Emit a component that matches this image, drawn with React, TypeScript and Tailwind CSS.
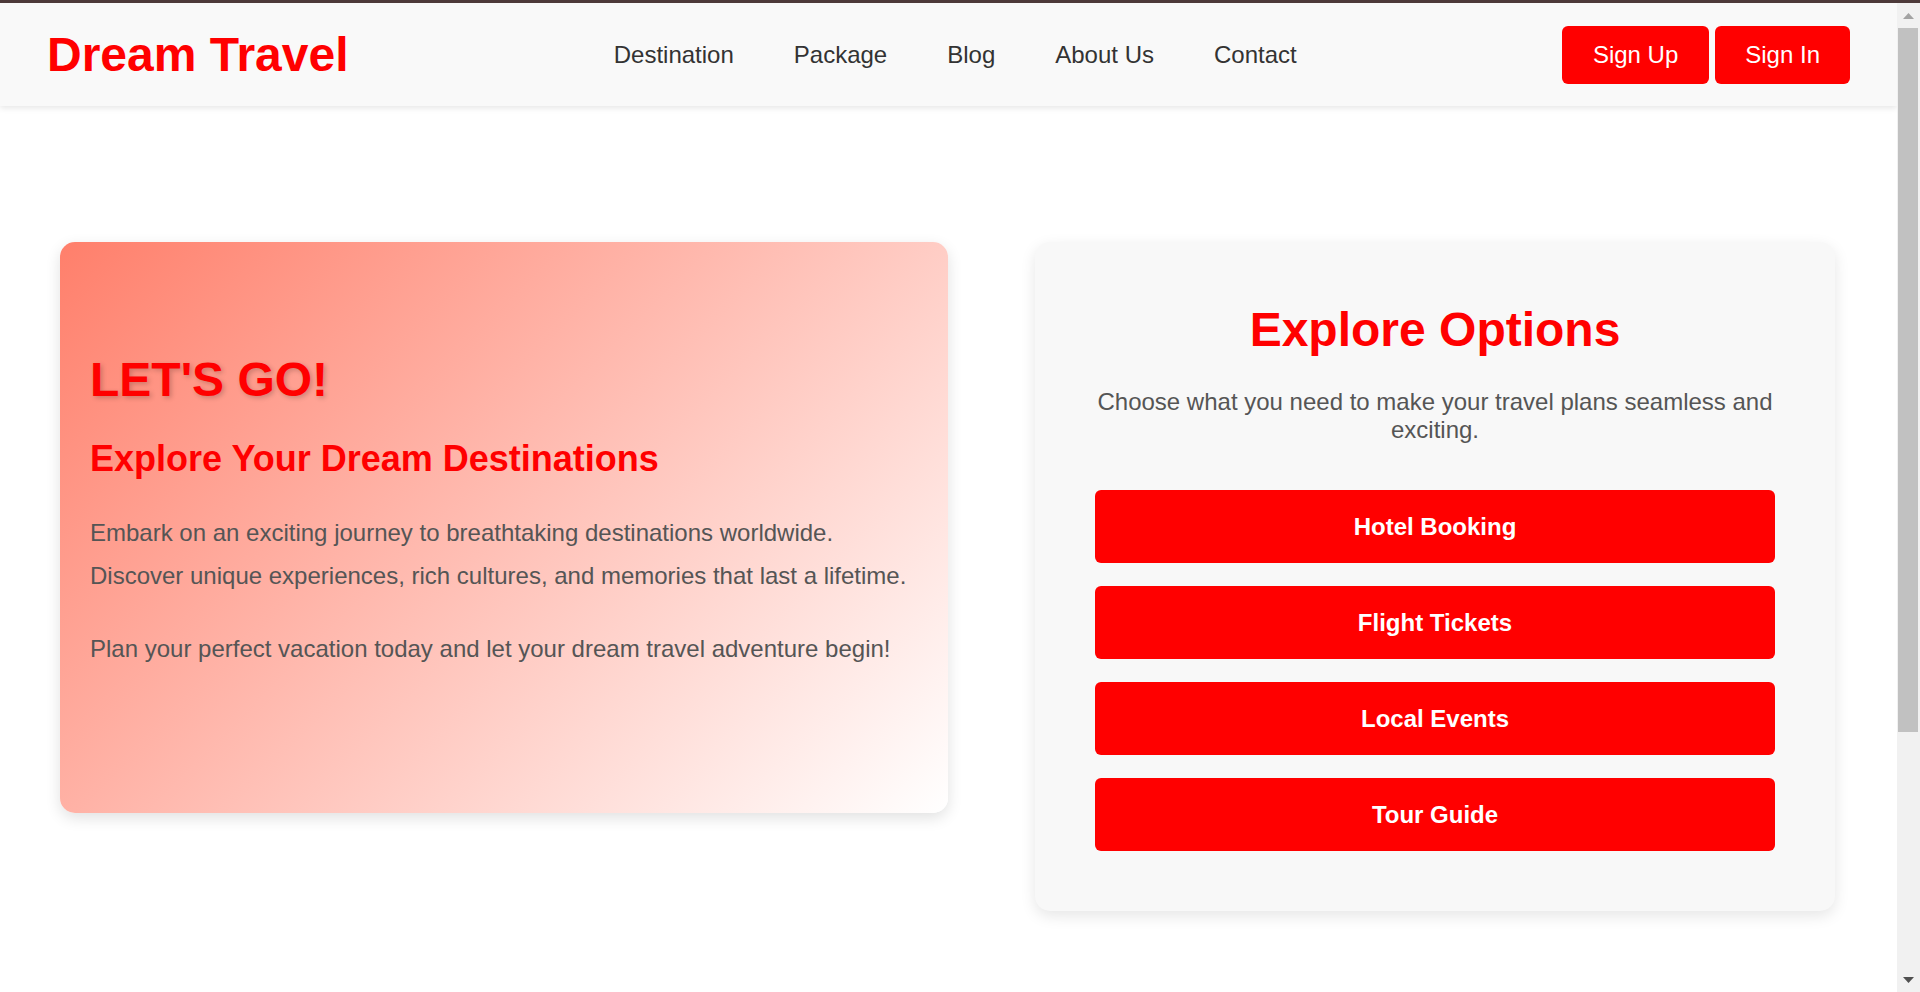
import React from 'react';

const navLinks = ['Destination', 'Package', 'Blog', 'About Us', 'Contact'];
const options = ['Hotel Booking', 'Flight Tickets', 'Local Events', 'Tour Guide'];

function Header() {
    return (
        <header className="relative z-10 flex h-[103px] shrink-0 items-center justify-between bg-[#f9f9f9] pl-[47px] pr-[47px] shadow-[0_2px_6px_rgba(0,0,0,0.1)]">
            <h1 className="text-[48px] font-bold leading-none text-[#ff0000]">Dream Travel</h1>
            <nav className="flex gap-[60px]">
                {navLinks.map((link) => (
                    <a key={link} href="#" className="text-[24px] text-[#333]">
                        {link}
                    </a>
                ))}
            </nav>
            <div className="flex gap-[6px]">
                <button className="h-[58px] rounded-[6px] bg-[#ff0000] px-[31px] text-[24px] text-white">Sign Up</button>
                <button className="h-[58px] rounded-[6px] bg-[#ff0000] px-[30px] text-[24px] text-white">Sign In</button>
            </div>
        </header>
    );
}

function HeroCard() {
    return (
        <div className="w-[888px] shrink-0 rounded-[15px] bg-[linear-gradient(135deg,#ff7f6b_0%,#ffffff_100%)] px-[30px] pt-[110px] pb-[112px] shadow-[0_5px_15px_rgba(0,0,0,0.12)]">
            <h2 className="mb-[31px] text-[48px] font-bold text-[#ff0000] [text-shadow:2px_2px_5px_rgba(0,0,0,0.2)]">LET'S GO!</h2>
            <h3 className="mb-[31px] text-[36px] font-bold text-[#ff0000]">Explore Your Dream Destinations</h3>
            <p className="mb-[30px] text-[24px] leading-[1.8] text-[#555]">
                Embark on an exciting journey to breathtaking destinations worldwide. Discover unique experiences, rich cultures, and memories that last a lifetime.
            </p>
            <p className="mb-[30px] text-[24px] leading-[1.8] text-[#555]">
                Plan your perfect vacation today and let your dream travel adventure begin!
            </p>
        </div>
    );
}

function OptionsCard() {
    return (
        <div className="w-[800px] shrink-0 rounded-[15px] bg-[#f8f8f8] p-[60px] text-center shadow-[0_5px_15px_rgba(0,0,0,0.1)]">
            <h2 className="text-[48px] font-bold text-[#ff0000]">Explore Options</h2>
            <p className="mt-[31px] mb-[46px] text-[24px] text-[#555]">
                Choose what you need to make your travel plans seamless and exciting.
            </p>
            <div className="flex flex-col gap-[23px]">
                {options.map((option) => (
                    <button key={option} className="h-[73px] w-full rounded-[6px] bg-[#ff0000] text-[24px] font-bold text-white">
                        {option}
                    </button>
                ))}
            </div>
        </div>
    );
}

// the window's scrollbar, as it shows in the picture
function ScrollBar() {
    return (
        <div className="flex w-[23px] shrink-0 flex-col bg-[#f1f1f1]">
            <div className="flex h-[25px] items-center justify-center">
                <svg width="11" height="6" viewBox="0 0 11 6">
                    <polygon points="0,6 5.5,0 11,6" fill="#a3a3a3" />
                </svg>
            </div>
            <div className="h-[704px] pl-[1px] pr-[2px]">
                <div className="h-full bg-[#c1c1c1]" />
            </div>
            <div className="flex-1" />
            <div className="flex h-[25px] items-center justify-center">
                <svg width="11" height="6" viewBox="0 0 11 6">
                    <polygon points="0,0 11,0 5.5,6" fill="#505050" />
                </svg>
            </div>
        </div>
    );
}

export default function App() {
    return (
        <div className="flex h-screen flex-col overflow-hidden bg-white font-['Liberation_Sans',Arial,sans-serif] leading-[normal]">
            <div className="h-[3px] shrink-0 bg-[#4d3a3a]" />
            <div className="flex min-h-0 flex-1">
                <div className="min-w-0 flex-1 overflow-hidden">
                    <Header />
                    <main className="flex items-start gap-[87px] pl-[60px] pt-[136px]">
                        <HeroCard />
                        <OptionsCard />
                    </main>
                </div>
                <ScrollBar />
            </div>
        </div>
    );
}
